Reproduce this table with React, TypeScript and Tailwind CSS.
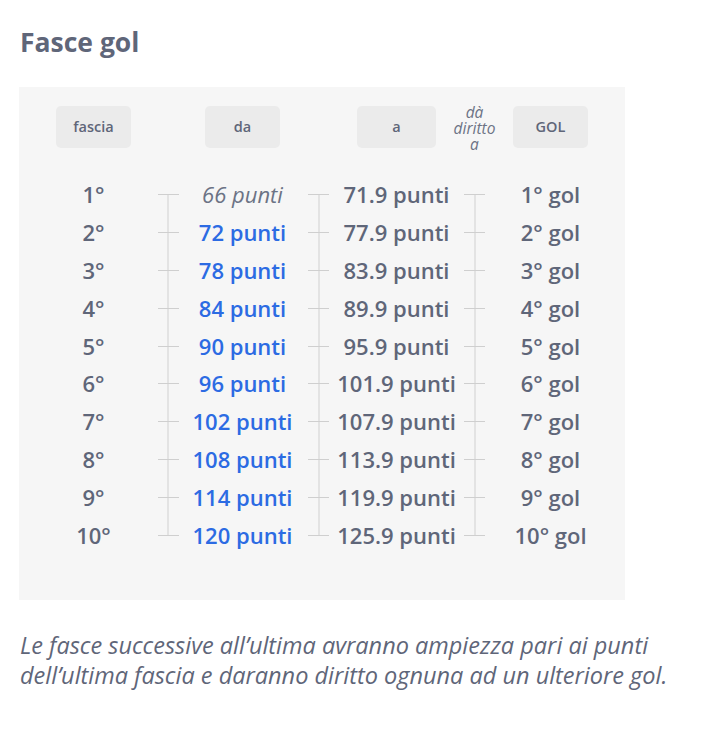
const rows = [
  { f: '1°', da: '66 punti', a: '71.9 punti', gol: '1° gol' },
  { f: '2°', da: '72 punti', a: '77.9 punti', gol: '2° gol' },
  { f: '3°', da: '78 punti', a: '83.9 punti', gol: '3° gol' },
  { f: '4°', da: '84 punti', a: '89.9 punti', gol: '4° gol' },
  { f: '5°', da: '90 punti', a: '95.9 punti', gol: '5° gol' },
  { f: '6°', da: '96 punti', a: '101.9 punti', gol: '6° gol' },
  { f: '7°', da: '102 punti', a: '107.9 punti', gol: '7° gol' },
  { f: '8°', da: '108 punti', a: '113.9 punti', gol: '8° gol' },
  { f: '9°', da: '114 punti', a: '119.9 punti', gol: '9° gol' },
  { f: '10°', da: '120 punti', a: '125.9 punti', gol: '10° gol' },
]

function Pill({ label, wide }: { label: string; wide?: boolean }) {
  return (
    <div
      className={
        'flex h-[42px] items-center justify-center rounded-[5px] bg-[#ebebeb] text-[14.5px] font-semibold text-[#5f6679] ' +
        (wide ? 'w-[79px]' : 'w-[75px]')
      }
    >
      {label}
    </div>
  )
}

function Connector({ first, last }: { first: boolean; last: boolean }) {
  return (
    <div className="relative flex h-full items-center justify-center">
      <div className="h-px w-[21px] bg-[#cfcfcf]" />
      <div
        className={
          'absolute left-1/2 w-px -translate-x-1/2 bg-[#cfcfcf] ' +
          (first ? 'top-1/2 bottom-0' : last ? 'top-0 bottom-1/2' : 'top-0 bottom-0')
        }
      />
    </div>
  )
}

function Cell({ children, className }: { children: React.ReactNode; className: string }) {
  return (
    <div className={'flex items-center justify-center whitespace-nowrap text-[22px] ' + className}>
      {children}
    </div>
  )
}

export default function App() {
  return (
    <div className="min-h-[734px] bg-white px-[19px] pt-[24px] font-['Open_Sans',sans-serif] text-[#5f6679]">
      <h1 className="ml-px h-[36px] text-[26.5px] font-bold leading-[36px]">Fasce gol</h1>

      <div className="mt-[27px] w-[606px] bg-[#f6f6f6] pl-[37px] pt-[19px] pb-[46px]">
        {/* Header */}
        <div className="grid h-[42px] grid-cols-[75px_74px_75px_77px_79px_77px_75px] items-center">
          <Pill label="fascia" />
          <div />
          <Pill label="da" />
          <div />
          <Pill label="a" wide />
          <div className="flex h-[42px] flex-col items-center justify-center pt-[2px] text-[15.5px] italic leading-[16px] text-[#6c7385]">
            <span>dà</span>
            <span>diritto</span>
            <span>a</span>
          </div>
          <Pill label="GOL" />
        </div>

        {/* Rows */}
        <div className="mt-[28px] grid grid-cols-[75px_74px_75px_77px_79px_77px_75px] auto-rows-[37.8px]">
          {rows.map((r, i) => {
            const first = i === 0
            const last = i === rows.length - 1
            return [
              <Cell key={'f' + i} className="font-semibold text-[#5f6679]">{r.f}</Cell>,
              <Connector key={'c1' + i} first={first} last={last} />,
              <Cell
                key={'d' + i}
                className={first ? 'italic text-[#6c7385]' : 'font-semibold text-[#2c6be3]'}
              >
                {r.da}
              </Cell>,
              <Connector key={'c2' + i} first={first} last={last} />,
              <Cell key={'a' + i} className="font-semibold text-[#5f6679]">{r.a}</Cell>,
              <Connector key={'c3' + i} first={first} last={last} />,
              <Cell key={'g' + i} className="font-semibold text-[#5f6679]">{r.gol}</Cell>,
            ]
          })}
        </div>
      </div>

      <p className="mt-[30px] ml-px w-[690px] whitespace-nowrap text-[23.5px] italic leading-[30px] text-[#5f6679]">
        Le fasce successive all’ultima avranno ampiezza pari ai punti
        <br />
        dell’ultima fascia e daranno diritto ognuna ad un ulteriore gol.
      </p>
    </div>
  )
}
